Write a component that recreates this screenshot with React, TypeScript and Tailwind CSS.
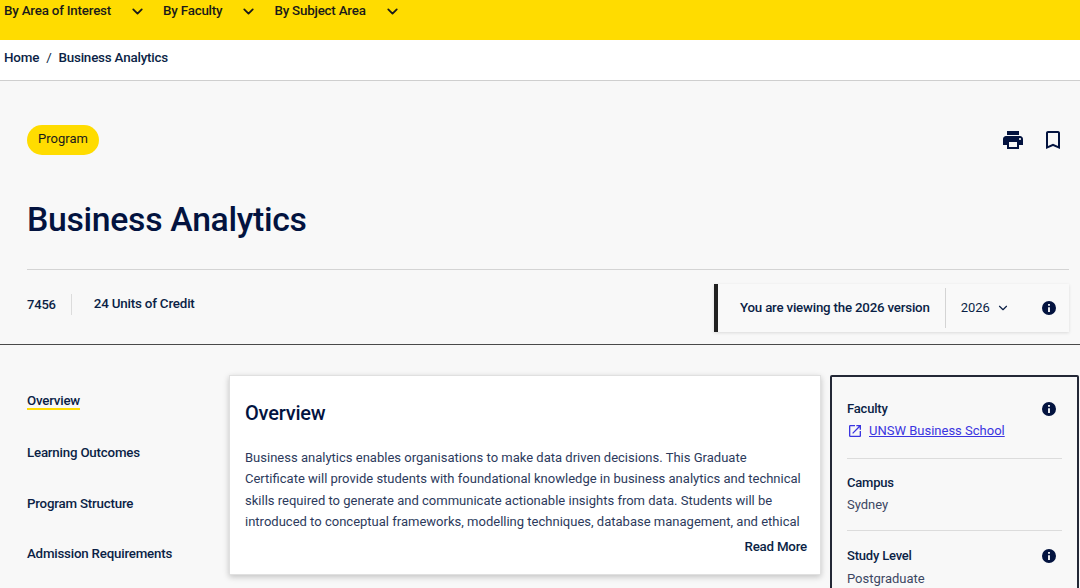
import { ChevronDown } from 'lucide-react'

const navy = 'text-[#0b1f46]'

function InfoIcon({ className = '' }: { className?: string }) {
  return (
    <svg viewBox="0 0 24 24" className={className} fill="#03133f">
      <path d="M12 1.5a10.5 10.5 0 1 0 0 21 10.5 10.5 0 0 0 0-21Zm1.4 16.5h-2.8v-7.2h2.8V18Zm0-9.2h-2.8V6h2.8v2.8Z" />
    </svg>
  )
}

function PrintIcon() {
  return (
    <svg viewBox="0 0 24 24" className="h-[24px] w-[24px]" fill="#03133f">
      <path d="M19 8H5c-1.66 0-3 1.34-3 3v6h4v4h12v-4h4v-6c0-1.66-1.34-3-3-3zm-3 11H8v-5h8v5zm3-7c-.55 0-1-.45-1-1s.45-1 1-1 1 .45 1 1-.45 1-1 1zm-1-9H6v4h12V3z" />
    </svg>
  )
}

function BookmarkIcon() {
  return (
    <svg viewBox="0 0 24 24" className="h-[24px] w-[24px]" fill="#03133f">
      <path d="M17 3H7c-1.1 0-2 .9-2 2v16l7-3 7 3V5c0-1.1-.9-2-2-2zm0 15-5-2.18L7 18V5h10v13z" />
    </svg>
  )
}

function OpenInNewIcon() {
  return (
    <svg viewBox="0 0 24 24" className="h-[16px] w-[16px] shrink-0" fill="#3b35e0">
      <path d="M19 19H5V5h7V3H5a2 2 0 0 0-2 2v14a2 2 0 0 0 2 2h14c1.1 0 2-.9 2-2v-7h-2v7zM14 3v2h3.59l-9.83 9.83 1.41 1.41L19 6.41V10h2V3h-7z" />
    </svg>
  )
}

function NavItem({ label }: { label: string }) {
  return (
    <div className="flex items-center gap-[18px]">
      <span className="text-[13.35px] font-medium tracking-[-0.2px] text-[#1a1a1a]">{label}</span>
      <ChevronDown size={17} strokeWidth={2.5} className="text-[#1a1a1a]" />
    </div>
  )
}

function SideLink({ label, active = false }: { label: string; active?: boolean }) {
  return (
    <span
      className={`w-fit text-[13.3px] font-medium tracking-[-0.2px] ${navy} ${
        active ? 'border-b-2 border-[#ffdc00] leading-[14px]' : 'leading-[16px]'
      }`}
    >
      {label}
    </span>
  )
}

export default function App() {
  return (
    <div
      className="h-[588px] w-[1080px] overflow-hidden bg-[#f8f8f8]"
      style={{ fontFamily: 'Roboto, sans-serif' }}
    >
      <div className="flex h-[40px] items-start gap-[17px] bg-[#ffdc00] pl-[4px] pt-[1px]">
        <NavItem label="By Area of Interest" />
        <NavItem label="By Faculty" />
        <NavItem label="By Subject Area" />
      </div>

      <div className={`flex h-[41px] items-center border-b border-[#cfcfcf] bg-white pb-[4px] pl-[4px] text-[13.4px] font-medium tracking-[-0.2px] ${navy}`}>
        <span>Home</span>
        <span className="mx-[7px] font-normal">/</span>
        <span>Business Analytics</span>
      </div>

      <div className="pl-[27px] pr-[11px]">
        <div className="flex items-center justify-between pr-[4px] pt-[44px]">
          <span className="flex h-[30px] w-[72px] items-center justify-center rounded-full bg-[#ffdc00] pb-[2px] text-[13px] text-[#1a1a1a]">
            Program
          </span>
          <div className="flex items-center gap-[16px]">
            <PrintIcon />
            <BookmarkIcon />
          </div>
        </div>
        <h1 className="mt-[45px] text-[33.75px] font-medium leading-[40px] tracking-[-0.3px] text-[#03133f]">
          Business Analytics
        </h1>
        <div className="mt-[29px] flex h-[75px] items-start justify-between border-t border-[#d4d4d4]">
          <div className={`mt-[23px] flex h-[22px] items-center text-[13.4px] font-medium tracking-[-0.2px] ${navy}`}>
            <span className="border-r border-[#dcdcdc] pr-[15px] text-[13px] leading-[21px]">7456</span>
            <span className="pl-[22px]">24 Units of Credit</span>
          </div>
          <div className="mt-[14px] flex h-[48px] w-[355px] items-center border-l-[4px] border-[#212121] bg-[#f9f9f9] shadow-[0_1px_3px_rgba(0,0,0,0.12)]">
            <span className={`pl-[22px] text-[13.3px] font-medium tracking-[-0.2px] ${navy}`}>
              You are viewing the 2026 version
            </span>
            <div className="ml-[15px] h-[40px] border-l border-[#d4d4d4]" />
            <span className={`ml-[15px] text-[13px] ${navy}`}>2026</span>
            <ChevronDown size={14} strokeWidth={2} className={`ml-[6px] ${navy}`} />
            <InfoIcon className="ml-[31px] h-[16px] w-[16px]" />
          </div>
        </div>
      </div>

      <div className="border-t border-[#4a4a4a]" />

      <div className="flex pl-[27px] pr-[1px] pt-[30px]">
        <div className="flex w-[202px] flex-col gap-[34.8px] pt-[19px]">
          <SideLink label="Overview" active />
          <SideLink label="Learning Outcomes" />
          <SideLink label="Program Structure" />
          <SideLink label="Admission Requirements" />
        </div>

        <div className="h-[200px] w-[592px] border border-[#e0e0e0] bg-white pl-[15px] pr-[13px] pt-[24px] shadow-[0_2px_6px_rgba(0,0,0,0.22)]">
          <h2 className="text-[20px] font-medium leading-[26px] tracking-[-0.2px] text-[#03133f]">Overview</h2>
          <p className="mt-[21px] h-[85px] overflow-hidden text-[13.02px] leading-[21.4px] text-[#2c3a5c]">
            Business analytics enables organisations to make data driven decisions. This Graduate
            <br />
            Certificate will provide students with foundational knowledge in business analytics and technical
            <br />
            skills required to generate and communicate actionable insights from data. Students will be
            <br />
            introduced to conceptual frameworks, modelling techniques, database management, and ethical
          </p>
          <div className={`mt-[5px] text-right text-[13.3px] font-medium tracking-[-0.2px] ${navy}`}>Read More</div>
        </div>

        <div className="ml-[9px] h-[240px] w-[249px] rounded-[2px] border-2 border-[#232836] px-[15px] pt-[23px]">
          <div className="border-b border-[#dcdcdc] pb-[18px]">
            <div className="flex items-center justify-between">
              <span className={`text-[13px] font-medium leading-[18px] tracking-[-0.2px] ${navy}`}>Faculty</span>
              <InfoIcon className="mr-[5px] h-[16px] w-[16px]" />
            </div>
            <div className="mt-[4px] flex items-center gap-[6px] text-[13px] leading-[18px] text-[#3b35e0]">
              <OpenInNewIcon />
              <span className="underline">UNSW Business School</span>
            </div>
          </div>
          <div className="border-b border-[#dcdcdc] pb-[16px] pt-[15px]">
            <div className={`text-[13px] font-medium leading-[18px] tracking-[-0.2px] ${navy}`}>Campus</div>
            <div className="mt-[4px] text-[13px] leading-[18px] text-[#3c4763]">Sydney</div>
          </div>
          <div className="pt-[16px]">
            <div className="flex items-center justify-between">
              <span className={`text-[13px] font-medium leading-[18px] tracking-[-0.2px] ${navy}`}>Study Level</span>
              <InfoIcon className="mr-[5px] h-[16px] w-[16px]" />
            </div>
            <div className="mt-[5px] text-[13px] leading-[18px] text-[#3c4763]">Postgraduate</div>
          </div>
        </div>
      </div>
    </div>
  )
}
